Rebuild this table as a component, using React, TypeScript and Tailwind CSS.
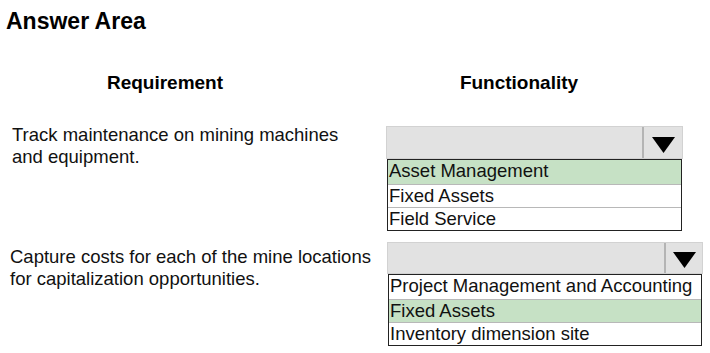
import React from "react";

function Triangle() {
  return (
    <svg width="23" height="16" viewBox="0 0 23 16">
      <polygon points="0,0 23,0 11.5,16" fill="#000" />
    </svg>
  );
}

type Opt = { label: string; selected?: boolean; h: string };

function Dropdown({
  width,
  arrowW,
  barH,
  options,
}: {
  width: string;
  arrowW: string;
  barH: string;
  options: Opt[];
}) {
  return (
    <div className={`flex flex-col ${width}`}>
      <div className={`flex ${barH} border border-[#d2d2d2] bg-[#e2e2e2]`}>
        <div className="flex-1" />
        <div className={`${arrowW} flex items-center justify-center border-l-2 border-l-[#b4b4b4] pt-[4px]`}>
          <Triangle />
        </div>
      </div>
      <div className="mx-[1px] flex flex-col border border-[#222] bg-white">
        {options.map((o, i) => (
          <div
            key={o.label}
            className={`${o.h} whitespace-nowrap pl-[1px] text-[18.5px] leading-[22px] text-[#111] ${
              i > 0 ? "border-t border-t-[#b8b8b8]" : ""
            } ${o.selected ? "bg-[#c6e1c5]" : "bg-white"}`}
          >
            {o.label}
          </div>
        ))}
      </div>
    </div>
  );
}

export default function App() {
  return (
    <div
      className="relative h-[353px] w-[710px] overflow-hidden bg-white text-black"
      style={{ fontFamily: '"Liberation Sans", Arial, sans-serif' }}
    >
      <div className="pl-[6px] pt-[7px] text-[23px] font-bold leading-[28px]">Answer Area</div>

      <div className="mt-[36px] flex text-[19px] font-bold leading-[24px]">
        <div className="w-[330px] text-center">Requirement</div>
        <div className="ml-[56px] w-[266px] text-center">Functionality</div>
      </div>

      <div className="mt-[29px] flex">
        <div className="w-[386px] whitespace-nowrap pl-[12px] text-[18.5px] leading-[22px] text-[#111]">
          Track maintenance on mining machines
          <br />
          and equipment.
        </div>
        <div className="mt-[2px]">
          <Dropdown
            width="w-[297px]"
            arrowW="w-[40px]"
            barH="h-[33px]"
            options={[
              { label: "Asset Management", selected: true, h: "h-[24px]" },
              { label: "Fixed Assets", h: "h-[23px]" },
              { label: "Field Service", h: "h-[23px]" },
            ]}
          />
        </div>
      </div>

      <div className="mt-[11px] flex">
        <div className="w-[387px] whitespace-nowrap pl-[10px] pt-[4px] text-[18.5px] leading-[22px] text-[#111]">
          Capture costs for each of the mine locations
          <br />
          for capitalization opportunities.
        </div>
        <div>
          <Dropdown
            width="w-[316px]"
            arrowW="w-[38px]"
            barH="h-[32px]"
            options={[
              { label: "Project Management and Accounting", h: "h-[24px]" },
              { label: "Fixed Assets", selected: true, h: "h-[23px]" },
              { label: "Inventory dimension site", h: "h-[23px]" },
            ]}
          />
        </div>
      </div>
    </div>
  );
}
